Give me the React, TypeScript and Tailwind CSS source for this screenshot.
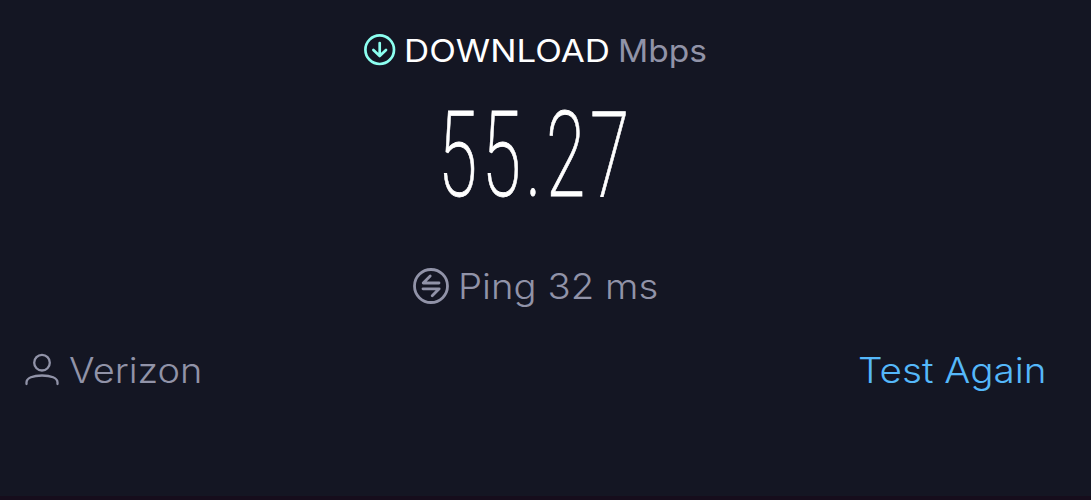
import * as React from 'react'
import { clsx } from 'clsx'

// ── Icons ─────────────────────────────────────────────────────────────────────
function DownloadIcon() {
  return (
    <svg width="32" height="32" viewBox="0 0 32 32" fill="none" stroke="currentColor" strokeWidth="2.7" className="shrink-0">
      <circle cx="15.7" cy="15.7" r="14.3" />
      <path d="M15.7 9v12.6M9.4 16l6.3 6 6.3-6" strokeLinecap="round" strokeLinejoin="round" />
    </svg>
  )
}

function PingIcon() {
  return (
    <svg width="36" height="36" viewBox="0 0 36 36" fill="none" stroke="currentColor" strokeWidth="2.8" className="shrink-0">
      <circle cx="18" cy="18" r="16.5" />
      <path d="M26 15H10.2l7-7M10 20.8h16.2l-7 7" strokeLinecap="round" strokeLinejoin="round" />
    </svg>
  )
}

function UserIcon() {
  return (
    <svg width="36" height="34" viewBox="0 0 36 34" fill="none" stroke="currentColor" strokeWidth="2.3" className="shrink-0">
      <circle cx="18" cy="9.7" r="7.8" />
      <path d="M2.5 31v-1.5c0-4.5 6.5-7 15.5-7s15.5 2.5 15.5 7V31" strokeLinecap="round" />
    </svg>
  )
}

// ── Label ─────────────────────────────────────────────────────────────────────
function Label({ className, children }: { className?: string; children: React.ReactNode }) {
  return (
    <span className={clsx('block origin-left whitespace-nowrap', className)}>
      {children}
    </span>
  )
}

// ── Speed result ──────────────────────────────────────────────────────────────
export default function App() {
  return (
    <main className="flex h-[500px] w-[1091px] flex-col overflow-hidden border-b-4 border-[#160d1c] bg-[#141623] font-['Inter',sans-serif] text-[#9193a8]">
      <div className="mt-[34px] ml-[364px] flex h-8 items-center">
        <span className="text-[#8cfff0]"><DownloadIcon /></span>
        <div className="ml-[8px] w-[214px] pt-[2px]">
          <Label className="scale-x-[1.125] text-[31px] leading-8 text-white">DOWNLOAD</Label>
        </div>
        <Label className="scale-x-[1.08] pt-[2px] text-[31px] leading-8">Mbps</Label>
      </div>

      <div className="mt-[30px] ml-[438px] h-[120px] w-[200px]">
        <Label className="w-max scale-x-[0.6] font-['Roboto',sans-serif] text-[119px] leading-[120px] font-extralight tracking-[7.5px] text-white [-webkit-text-stroke:0.8px_white]">55.27</Label>
      </div>

      <div className="mt-[52px] ml-[413px] flex h-9 items-center">
        <PingIcon />
        <Label className="ml-[9px] scale-x-[1.095] text-[35px] leading-9 font-light">Ping 32 ms</Label>
      </div>

      <div className="mt-[48px] flex h-9 items-center pl-6">
        <UserIcon />
        <div className="ml-[9px] w-[789px]">
          <Label className="w-max scale-x-[1.085] text-[35px] leading-9 font-light">Verizon</Label>
        </div>
        <button type="button" className="text-[#55b8fa]">
          <Label className="w-max scale-x-[1.105] text-[35px] leading-9 font-light">Test Again</Label>
        </button>
      </div>
    </main>
  )
}
